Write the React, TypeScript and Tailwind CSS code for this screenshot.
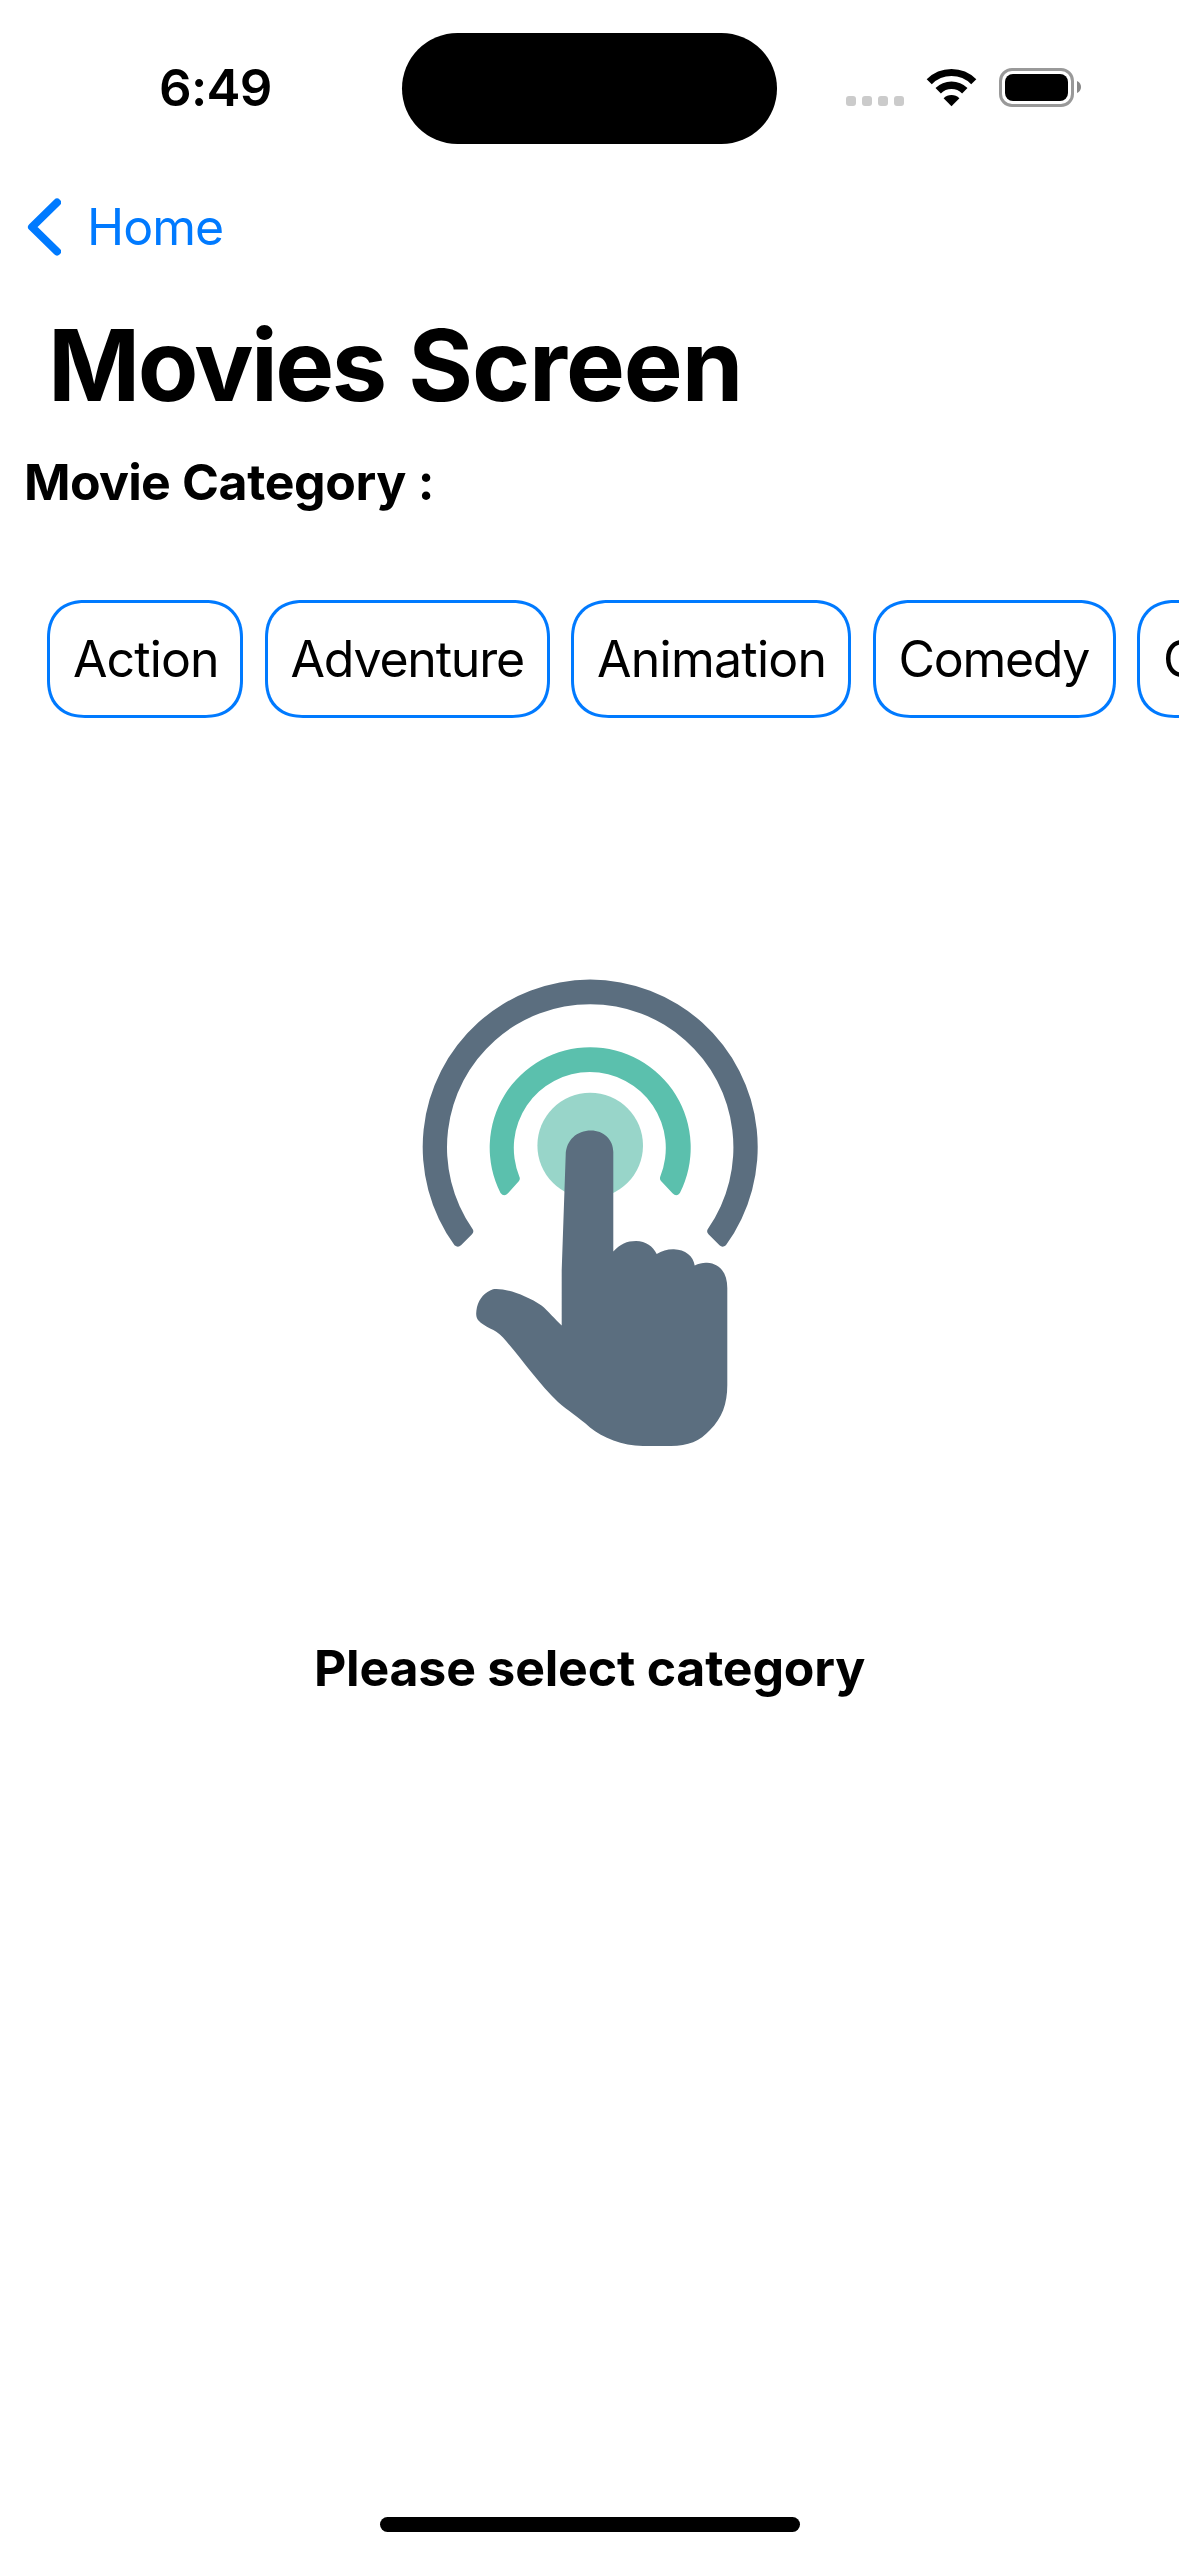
import React from "react";

const SLATE = "#5b6e7f";

const categories = [
  { name: "Action", box: "w-[196px] tracking-[-0.9px]" },
  { name: "Adventure", box: "w-[285px] tracking-[-1.2px]" },
  { name: "Animation", box: "w-[280px] tracking-[-0.75px]" },
  { name: "Comedy", box: "w-[243px] tracking-[-1.3px]" },
  { name: "Crime", box: "w-[204px] tracking-[-1px]" },
];

function StatusIcons() {
  return (
    <svg viewBox="840 60 250 56" className="mb-[2px] ml-[63px] h-[56px] w-[250px] shrink-0">
      {[846, 862, 878, 894].map((x) => (
        <rect key={x} x={x} y="96" width="10" height="10" rx="3" fill="#cbcbcb" />
      ))}
      <g fill="none" stroke="#000">
        <path d="M929.23 81.73A31.5 31.5 0 0 1 973.77 81.73" strokeWidth="7.2" />
        <path d="M938.2 90.7A18.8 18.8 0 0 1 964.8 90.7" strokeWidth="7.6" />
      </g>
      <path d="M951.5 106.2l-7.9-7.9a11.3 11.3 0 0 1 15.8 0z" fill="#000" />
      <rect x="1000.5" y="69.5" width="72" height="36" rx="11.5" fill="none" stroke="#999" strokeWidth="3" />
      <rect x="1005" y="74" width="63" height="27" rx="8" fill="#000" />
      <path d="M1077 81c5.4 2.2 5.4 9.8 0 12z" fill="#888" />
    </svg>
  );
}

function StatusBar() {
  return (
    <header className="flex h-[162px] shrink-0 pt-[33px]">
      <div className="flex h-[111px] w-full items-center">
        <span className="w-[402px] shrink-0 pb-[2px] pl-[159px] text-[51px] leading-[60px] font-semibold tracking-[-0.7px]">
          6:49
        </span>
        <div className="h-[111px] w-[375px] shrink-0 rounded-full bg-black" />
        <StatusIcons />
      </div>
    </header>
  );
}

function TapIllustration() {
  return (
    <svg viewBox="400 960 380 500" className="mt-[242px] h-[500px] w-[380px] shrink-0 self-center">
      <path
        d="M454.5 1245.3A167.5 167.5 0 1 1 725.9 1245.3Q722.5 1248 719.5 1245.3L708.5 1234.3Q706 1231.5 708 1228.8A143.2 143.2 0 1 0 472.4 1228.8Q474.5 1231.5 472 1234.3L461 1245.3Q458 1248 454.5 1245.3Z"
        fill={SLATE}
      />
      <path
        d="M500.5 1193A100.5 100.5 0 1 1 679.9 1193Q676.5 1197.5 672.5 1193.3L661 1181Q659.3 1179 660.3 1176.5A76 76 0 1 0 519.3 1176.5Q520.5 1179 519 1181L508 1193.3Q504 1197.5 500.5 1193Z"
        fill="#5bc0ad"
      />
      <circle cx="590.2" cy="1145.5" r="52.8" fill="#98d5c9" />
      <path
        d="M565.7 1155C566 1140 577 1130.5 591 1130.5C603.5 1130.5 613.3 1139.5 613.3 1152V1251.5C620 1244 627 1241 636 1241C646 1241 653 1246.5 656.7 1254C662 1250.5 668 1249 674 1249.2C685 1249.5 693.5 1256 694.7 1265.5C699 1263.3 703 1262.5 707 1262.7C720 1263.5 727.3 1273 727.3 1288V1385C727.3 1404 722 1418 710 1430C700 1441 688 1446 671 1446H643C622 1445.5 603 1438 590 1427.5C578 1416.5 568 1411 558 1402C538 1383 521 1358 503 1337.5C495 1328.5 485 1328 478 1320C475.5 1316.5 476 1312 477 1307C479.5 1298 485 1292 493 1289.2C504 1287.5 526 1295 541.5 1305.5C548 1310.5 555 1319.5 561.7 1325.5V1270Z"
        fill={SLATE}
      />
    </svg>
  );
}

export default function App() {
  return (
    <main className="flex h-[2556px] w-[1179px] flex-col overflow-hidden bg-white font-[Inter,sans-serif] text-black">
      <StatusBar />

      <nav className="flex h-[129px] shrink-0 items-center pl-[27px] text-[#007aff]">
        <svg viewBox="0 0 34 58" className="h-[58px] w-[34px]" fill="none">
          <path d="M30 4.5L5 29L30 53.5" stroke="currentColor" strokeWidth="8" strokeLinecap="round" strokeLinejoin="round" />
        </svg>
        <a className="ml-[26px] text-[50px] leading-[60px] tracking-[-0.98px]">Home</a>
      </nav>

      <h1 className="h-[148px] shrink-0 pl-[48px] text-[99px] leading-[148px] font-bold">
        <span className="tracking-[-2.5px]">Movies</span> <span className="tracking-[-1.1px]">Screen</span>
      </h1>
      <h2 className="h-[85px] shrink-0 pl-[24px] text-[50px] leading-[86px] font-bold">
        <span className="tracking-[-0.7px]">Movie</span> <span className="tracking-[-0.4px]">Category</span> :
      </h2>

      <div className="mt-[76px] flex shrink-0 gap-[21.5px] pl-[47px]">
        {categories.map(({ name, box }) => (
          <button
            key={name}
            className={`${box} h-[118px] shrink-0 rounded-[38px] border-[3px] border-[#007aff] pl-[23px] text-left text-[50px] leading-[60px] whitespace-nowrap [corner-shape:superellipse(1.2)]`}
          >
            {name}
          </button>
        ))}
      </div>

      <TapIllustration />
      <p className="mt-[168px] shrink-0 text-center text-[50px] leading-[80px] font-bold tracking-[-0.2px]">Please select category</p>

      <div className="mt-auto mb-[24px] h-[15px] w-[420px] shrink-0 self-center rounded-full bg-black" />
    </main>
  );
}
